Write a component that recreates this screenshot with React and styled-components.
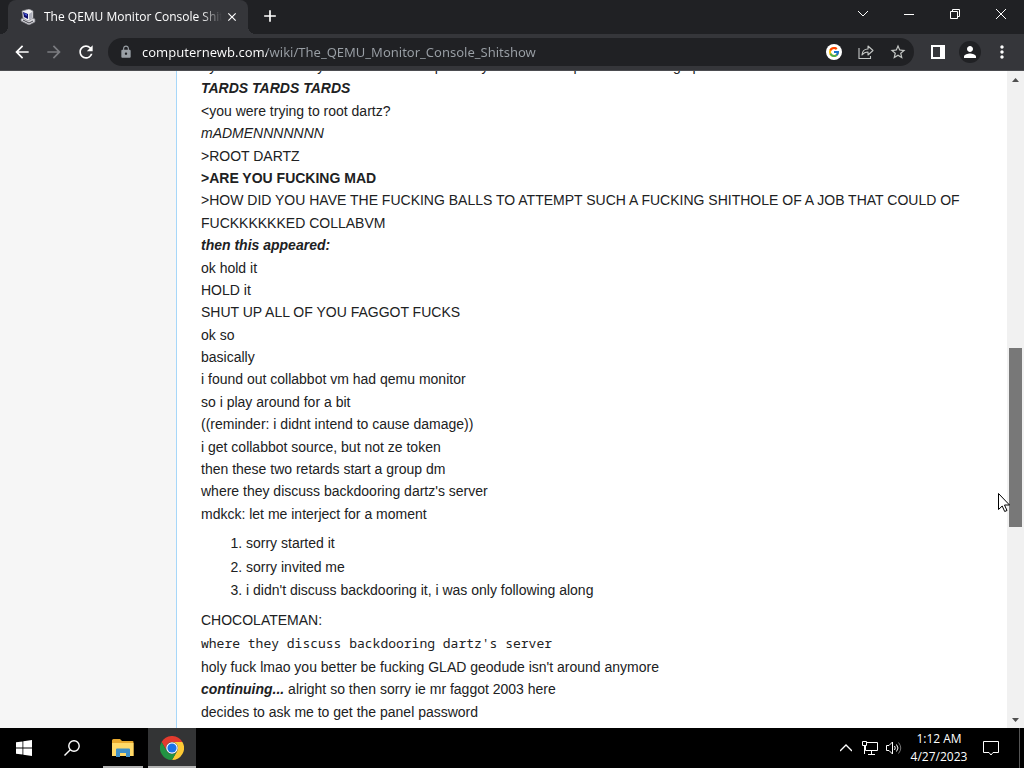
import React from "react";
import styled, { createGlobalStyle, css } from "styled-components";
import { FcGoogle } from "react-icons/fc";
import {
    MdArrowBack,
    MdArrowForward,
    MdRefresh,
    MdLock,
    MdStarBorder,
    MdPerson,
    MdMoreVert,
    MdAdd,
    MdClose
} from "react-icons/md";

const uiFont = `"Open Sans", "Noto Sans", sans-serif`;

const GlobalStyle = createGlobalStyle`
    *{
        box-sizing: border-box;
    }
    body{
        margin: 0;
        overflow: hidden;
    }
    button{
        padding: 0;
        border: none;
        background: none;
        color: inherit;
        font: inherit;
    }
    svg{
        display: block;
        flex: none;
    }
`;

const Desktop = styled.div`
    display: flex;
    flex-direction: column;
    height: 100vh;
    position: relative;
    font-family: ${uiFont};
`;

// browser frame
const TitleBar = styled.header`
    display: flex;
    flex: none;
    height: 34px;
    padding-left: 8px;
    background: #202124;
    color: #fff;
`;

const Tab = styled.div`
    position: relative;
    display: flex;
    align-items: center;
    width: 240px;
    padding: 0 10px 0 12px;
    border-radius: 8px 8px 0 0;
    background: #35363a;
    /* curved feet on both sides of the tab */
    &::before, &::after{
        content: "";
        position: absolute;
        bottom: 0;
        width: 8px;
        height: 8px;
    }
    &::before{
        right: 100%;
        background: radial-gradient(circle at 0 0, transparent 8px, #35363a 8px);
    }
    &::after{
        left: 100%;
        background: radial-gradient(circle at 100% 0, transparent 8px, #35363a 8px);
    }
`;

const TabTitle = styled.span`
    flex: 1;
    margin: 0 4px 0 8px;
    overflow: hidden;
    white-space: nowrap;
    font-size: 12px;
    line-height: 16px;
    mask-image: linear-gradient(90deg, #000 88%, transparent);
`;

const IconButton = styled.button`
    display: flex;
    align-items: center;
    justify-content: center;
    flex: none;
    width: ${props => props.$width || 32}px;
    height: ${props => props.$height || 32}px;
    color: ${props => props.$color || "#fff"};
`;

const WindowButtons = styled.div`
    display: flex;
    margin-left: auto;
`;

const Toolbar = styled.div`
    display: flex;
    align-items: center;
    flex: none;
    height: 37px;
    padding: 0 6px;
    background: #35363a;
    border-bottom: 1px solid #4b4c50;
`;

const AddressBar = styled.label`
    display: flex;
    align-items: center;
    flex: 1;
    height: 28px;
    margin: 0 8px 0 6px;
    padding-left: 11px;
    border-radius: 14px;
    background: #202124;
    color: #9aa0a6;
`;

/* host part is white, the path is gray */
const AddressInput = styled.input`
    flex: 1;
    min-width: 0;
    height: 24px;
    margin-left: 9px;
    padding: 0;
    border: none;
    outline: none;
    font-family: "Noto Sans", "Open Sans", sans-serif;
    font-size: 13px;
    color: transparent;
    background: linear-gradient(90deg, #fff 125px, #9aa0a6 125px);
    background-clip: text;
    -webkit-background-clip: text;
`;

const Avatar = styled.span`
    display: flex;
    align-items: center;
    justify-content: center;
    width: 22px;
    height: 22px;
    border-radius: 50%;
    background: #202124;
`;

const GoogleBadge = styled.span`
    padding: 2px;
    border-radius: 50%;
    background: #fff;
`;

// wiki page
const Viewport = styled.div`
    display: flex;
    flex: 1;
    min-height: 0;
    background: #fff;
`;

const Sidebar = styled.aside`
    flex: none;
    width: 176px;
    background: #f6f6f6;
`;

const Content = styled.main`
    flex: 1;
    min-width: 0;
    overflow: hidden;
    padding: 0 24px;
    border-left: 1px solid #a7d7f9;
    font-family: "Liberation Sans", Arial, sans-serif;
    font-size: 14px;
    line-height: 1.6;
    color: #202122;
`;

// already scrolled, so the first line is half hidden
const Article = styled.article`
    margin-top: -16px;
    p{
        margin: 0 0 7px;
    }
    ol{
        margin: 0 0 8px;
        padding-left: 45px;
    }
    li{
        margin-bottom: 1px;
    }
    code{
        display: inline-block;
        height: 23px;
        font-family: "Noto Sans Mono", "DejaVu Sans Mono", monospace;
        font-size: 13px;
    }
`;

const Scrollbar = styled.div`
    display: flex;
    flex-direction: column;
    flex: none;
    width: 17px;
    background: #f1f1f1;
`;

const ScrollTrack = styled.div`
    flex: ${props => props.$size};
`;

const ScrollThumb = styled(ScrollTrack)`
    margin: 0 2px;
    background: #787878;
`;

// windows taskbar
const Taskbar = styled.footer`
    display: flex;
    flex: none;
    height: 40px;
    background: #000;
    color: #fff;
`;

const TaskButton = styled.button`
    display: flex;
    align-items: center;
    justify-content: center;
    width: 48px;
    border-bottom: 2px solid transparent;
    border-top: 2px solid transparent;
    ${props => props.$open && css`
        width: 40px;
        margin: 0 5px 0 7px;
        border-bottom-color: #b4b4b4;
    `}
    ${props => props.$active && css`
        background: #333435 padding-box;
        border-top-color: #333435;
        border-bottom-color: #b4b4b4;
    `}
`;

const Tray = styled.div`
    display: flex;
    align-items: center;
    margin-left: auto;
`;

const Clock = styled.time`
    width: 66px;
    text-align: center;
    font-size: 12px;
    line-height: 18px;
`;

const ShowDesktop = styled.button`
    align-self: stretch;
    width: 5px;
    margin-left: 9px;
    border-left: 1px solid #555;
`;

const Cursor = styled.svg`
    position: absolute;
    top: 493px;
    right: 14px;
`;

const lines = [
    "ok hold it",
    "HOLD it",
    "SHUT UP ALL OF YOU FAGGOT FUCKS",
    "ok so",
    "basically",
    "i found out collabbot vm had qemu monitor",
    "so i play around for a bit",
    "((reminder: i didnt intend to cause damage))",
    "i get collabbot source, but not ze token",
    "then these two retards start a group dm",
    "where they discuss backdooring dartz's server",
    "mdkck: let me interject for a moment"
];

const steps = [
    "sorry started it",
    "sorry invited me",
    "i didn't discuss backdooring it, i was only following along"
];

const Favicon = () => (
    <svg width="16" height="16" viewBox="0 0 16 16">
        <path d="M1 10l7-3 7 3v3l-6 3-8-4z" fill="#d8d8dc" stroke="#77777f" strokeWidth=".7" />
        <path d="M2 2l7-2 4 2v7l-5 3-5-3z" fill="#f0f0f2" stroke="#88888f" strokeWidth=".7" />
        <path d="M3 3l5 2v5L4 8z" fill="#10106c" />
        <path d="M4 4l3 1v2L5 6z" fill="#4858d8" />
        <path d="M9 5l3-2v6l-3 2z" fill="#aeb0bb" />
        <path d="M3 11l6 3 4-2" fill="none" stroke="#44444c" />
    </svg>
);

const ShareIcon = () => (
    <svg width="16" height="16" viewBox="0 0 16 16" fill="none" stroke="currentColor" strokeWidth="1.1">
        <path d="M1 4v10.500h11.500V12" />
        <path d="M4 11c.3-4 2.600-6 6-6V2l5 4.500-5 4.500V8C7.500 8 5.500 9 4 11z" strokeLinejoin="round" />
    </svg>
);

const SidePanelIcon = () => (
    <svg width="14" height="14" viewBox="0 0 14 14">
        <path d="M0 0h14v14H0zM2 2v10h7V2z" fill="#fff" fillRule="evenodd" />
    </svg>
);

const ChromeIcon = () => (
    <svg width="24" height="24" viewBox="0 0 24 24">
        <path d="M1.600 6A12 12 0 0 1 22.400 6L12 6A6 6 0 0 0 6.800 15z" fill="#e33b2e" />
        <path d="M22.400 6A12 12 0 0 1 12 24L17.200 15A6 6 0 0 0 12 6z" fill="#fcc934" />
        <path d="M12 24A12 12 0 0 1 1.600 6L6.800 15A6 6 0 0 0 17.200 15z" fill="#229342" />
        <circle cx="12" cy="12" r="5.800" fill="#fff" />
        <circle cx="12" cy="12" r="4.600" fill="#1a73e8" />
    </svg>
);

const ExplorerIcon = () => (
    <svg width="22" height="18" viewBox="0 0 22 18">
        <path d="M0 1.500Q0 0 1.500 0H8l2 2h10.500q1 0 1 1v14H0z" fill="#e8a92e" />
        <path d="M0 4h21.500v13H0z" fill="#ffd968" />
        <path d="M4 18v-7.500q0-1 1-1h12q1 0 1 1V18h-4v-4H8v4z" fill="#3f8fc6" />
    </svg>
);

const StartIcon = () => (
    <svg width="16" height="16" viewBox="0 0 16 16" fill="#fff">
        <path d="M0 2.300l6.500-.9v6.200H0zM7.300 1.300L16 0v7.600H7.300zM0 8.400h6.500v6.200L0 13.700zM7.300 8.400H16V16l-8.700-1.300z" />
    </svg>
);

const SearchIcon = () => (
    <svg width="16" height="16" viewBox="0 0 16 16" fill="none" stroke="#fff" strokeWidth="1.400">
        <circle cx="10" cy="6" r="5.200" />
        <path d="M6.300 9.700L.5 15.500" />
    </svg>
);

const NetworkIcon = () => (
    <svg width="16" height="14" viewBox="0 0 16 14" fill="none" stroke="#fff">
        <path d="M5 1.500h10.500v8H3.500V5M9.500 10v3M6 13.500h7" />
        <path d="M.5.5h4v4h-4zM2.500 5v8" />
    </svg>
);

const VolumeIcon = () => (
    <svg width="16" height="14" viewBox="0 0 16 14" fill="none" stroke="#fff">
        <path d="M.5 4.500h2.500L6.500 1v12L3 9.500H.5z" />
        <path d="M8.500 5q1.500 2 0 4M10.500 3.500q3 3.500 0 7" />
        <path d="M12.500 1.500q4.500 5.500 0 11" stroke="#777" />
    </svg>
);

const Arrow = ({ down }) => (
    <svg width="17" height="17" viewBox="0 0 17 17">
        <path d={down ? "M5 7h7l-3.500 4z" : "M5 11h7L8.500 7z"} fill="#505050" />
    </svg>
);

const Browser = () => (
    <>
        <TitleBar>
            <Tab>
                <Favicon />
                <TabTitle>The QEMU Monitor Console Shitshow</TabTitle>
                <IconButton $width={12} aria-label="Close tab"><MdClose size={14} /></IconButton>
            </Tab>
            <IconButton $width={44} aria-label="New tab"><MdAdd size={20} /></IconButton>
            <WindowButtons>
                <IconButton $width={46} $height={28} aria-label="Search tabs">
                    <svg width="12" height="8" fill="none" stroke="currentColor"><path d="M1 1l5 5 5-5" /></svg>
                </IconButton>
                <IconButton $width={46} $height={28} aria-label="Minimize">
                    <svg width="10" height="10" stroke="currentColor"><path d="M0 5.500h10" /></svg>
                </IconButton>
                <IconButton $width={46} $height={28} aria-label="Restore">
                    <svg width="10" height="10" fill="none" stroke="currentColor">
                        <path d="M.5 2.500h7v7h-7zM2.500 2V.5h7v7H8" />
                    </svg>
                </IconButton>
                <IconButton $width={46} $height={28} aria-label="Close">
                    <svg width="10" height="10" stroke="currentColor"><path d="M0 0l10 10M10 0L0 10" /></svg>
                </IconButton>
            </WindowButtons>
        </TitleBar>
        <Toolbar>
            <IconButton aria-label="Back"><MdArrowBack size={20} /></IconButton>
            <IconButton $color="#7b7c80" aria-label="Forward"><MdArrowForward size={20} /></IconButton>
            <IconButton aria-label="Reload"><MdRefresh size={20} /></IconButton>
            <AddressBar>
                <MdLock size={14} />
                <AddressInput
                    aria-label="Address"
                    defaultValue="computernewb.com/wiki/The_QEMU_Monitor_Console_Shitshow"
                    spellCheck="false"
                />
                <IconButton aria-label="Search with Google">
                    <GoogleBadge><FcGoogle size={12} /></GoogleBadge>
                </IconButton>
                <IconButton $color="#c4c7c5" aria-label="Share"><ShareIcon /></IconButton>
                <IconButton $color="#c4c7c5" aria-label="Bookmark"><MdStarBorder size={18} /></IconButton>
            </AddressBar>
            <IconButton aria-label="Side panel"><SidePanelIcon /></IconButton>
            <IconButton aria-label="Profile"><Avatar><MdPerson size={18} /></Avatar></IconButton>
            <IconButton aria-label="Menu"><MdMoreVert size={20} /></IconButton>
        </Toolbar>
    </>
);

const WikiPage = () => (
    <Viewport>
        <Sidebar />
        <Content>
            <Article>
                <p>
                    &gt;you saw what they did to him where part only one of these put that in a song up<br />
                    <b><i>TARDS TARDS TARDS</i></b><br />
                    &lt;you were trying to root dartz?<br />
                    <i>mADMENNNNNNN</i><br />
                    &gt;ROOT DARTZ<br />
                    <b>&gt;ARE YOU FUCKING MAD</b><br />
                    &gt;HOW DID YOU HAVE THE FUCKING BALLS TO ATTEMPT SUCH A FUCKING SHITHOLE OF A JOB THAT COULD OF FUCKKKKKKED COLLABVM<br />
                    <b><i>then this appeared:</i></b>
                    {lines.map(line => (
                        <React.Fragment key={line}><br />{line}</React.Fragment>
                    ))}
                </p>
                <ol>
                    {steps.map(step => <li key={step}>{step}</li>)}
                </ol>
                <p>
                    CHOCOLATEMAN:<br />
                    <code>where they discuss backdooring dartz's server</code><br />
                    holy fuck lmao you better be fucking GLAD geodude isn't around anymore<br />
                    <b><i>continuing...</i></b> alright so then sorry ie mr faggot 2003 here<br />
                    decides to ask me to get the panel password
                </p>
            </Article>
        </Content>
        <Scrollbar>
            <Arrow />
            <ScrollTrack $size={260} />
            <ScrollThumb $size={179} />
            <ScrollTrack $size={184} />
            <Arrow down />
        </Scrollbar>
    </Viewport>
);

const App = () => {
    return (
        <Desktop>
            <GlobalStyle />
            <Browser />
            <WikiPage />
            <Taskbar>
                <TaskButton aria-label="Start"><StartIcon /></TaskButton>
                <TaskButton aria-label="Search"><SearchIcon /></TaskButton>
                <TaskButton $open aria-label="File Explorer"><ExplorerIcon /></TaskButton>
                <TaskButton $active aria-label="Google Chrome"><ChromeIcon /></TaskButton>
                <Tray>
                    <IconButton $width={24} aria-label="Show hidden icons">
                        <svg width="12" height="8" fill="none" stroke="currentColor" strokeWidth="1.400"><path d="M0 7l6-6 6 6" /></svg>
                    </IconButton>
                    <IconButton $width={24} aria-label="Network"><NetworkIcon /></IconButton>
                    <IconButton $width={24} aria-label="Volume"><VolumeIcon /></IconButton>
                    <Clock>1:12 AM<br />4/27/2023</Clock>
                    <IconButton $width={38} aria-label="Notifications">
                        <svg width="16" height="16" fill="none" stroke="currentColor">
                            <path d="M.5 1.500h15v11H10L8 15l-2-2.500H.5z" />
                        </svg>
                    </IconButton>
                    <ShowDesktop aria-label="Show desktop" />
                </Tray>
            </Taskbar>
            <Cursor width="12" height="20" viewBox="0 0 12 20">
                <path d="M.5.5v16l3.700-3.500 2.500 5.500 2.300-1-2.500-5.500h5z" fill="#fff" stroke="#000" />
            </Cursor>
        </Desktop>
    );
};

export default App;
